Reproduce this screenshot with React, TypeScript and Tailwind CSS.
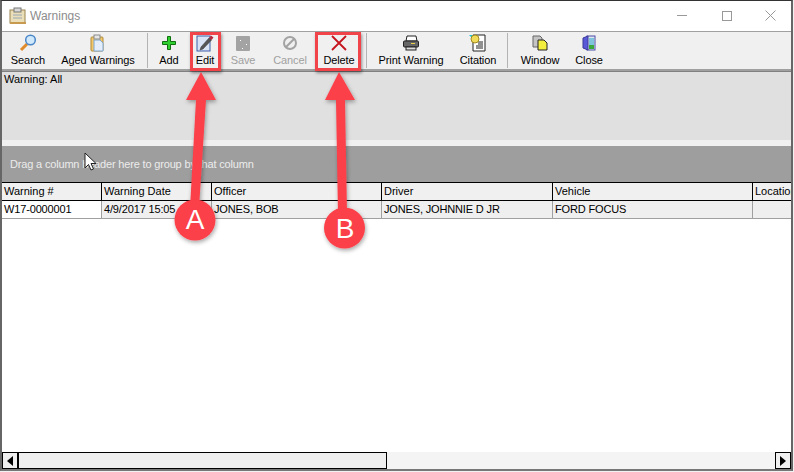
import React from 'react';

const font = { fontFamily: '"Liberation Sans", Arial, sans-serif' };

const SearchIcon = () => (
  <svg width="18" height="18" viewBox="0 0 18 18">
    <path d="M8 10 L2 16" stroke="#e08a2a" strokeWidth="3" />
    <circle cx="11.5" cy="6" r="4.8" fill="#cfe8fb" stroke="#4a86c8" strokeWidth="1.5" />
  </svg>
);

const AgedIcon = () => (
  <svg width="18" height="18" viewBox="0 0 18 18">
    <rect x="2" y="3" width="12" height="14" rx="1" fill="#f3c86a" stroke="#b08a3a" />
    <rect x="5" y="1" width="6" height="4" fill="#e6e6e6" stroke="#8a8a8a" />
    <path d="M5 6h6l3 3v8H5z" fill="#e3eefa" stroke="#7ea6d0" />
  </svg>
);

const AddIcon = () => (
  <svg width="16" height="16" viewBox="0 0 16 16">
    <path d="M6.5 1.5h3v5h5v3h-5v5h-3v-5h-5v-3h5z" fill="#2fd02f" stroke="#0f6f0f" />
  </svg>
);

const EditIcon = () => (
  <svg width="18" height="18" viewBox="0 0 18 18">
    <rect x="1" y="2" width="13" height="15" fill="#d8e4f6" stroke="#3c5fa8" />
    <path d="M5 13 L13 4 L15.5 6 L7 15 L4 16z" fill="#555" stroke="#333" strokeWidth="0.5" />
    <path d="M13 4 L15 1.5 L17.5 3.5 L15.5 6z" fill="#b8283c" />
  </svg>
);

const SaveIcon = () => (
  <svg width="16" height="16" viewBox="0 0 16 16">
    <rect x="1" y="1" width="14" height="15" rx="1" fill="#a3a3a3" />
    <rect x="5" y="5" width="1" height="1" fill="#fff" />
    <rect x="11" y="9" width="1" height="1" fill="#fff" />
    <rect x="7" y="13" width="1" height="1" fill="#fff" />
  </svg>
);

const CancelIcon = () => (
  <svg width="16" height="16" viewBox="0 0 16 16" fill="none" stroke="#a3a3a3" strokeWidth="2">
    <circle cx="8" cy="8" r="6" />
    <path d="M4 12 L12 4" />
  </svg>
);

const DeleteIcon = () => (
  <svg width="18" height="16" viewBox="0 0 18 16" fill="none" stroke="#c4141c" strokeWidth="1.8">
    <path d="M2 1 L16 15 M16 1 L2 15" />
  </svg>
);

const PrintIcon = () => (
  <svg width="18" height="16" viewBox="0 0 18 16">
    <path d="M5 1h9l1 5H4z" fill="#fff" stroke="#222" />
    <rect x="1.5" y="6" width="15" height="6" rx="1" fill="#666" stroke="#222" />
    <rect x="4" y="12" width="10" height="3" fill="#ddd" stroke="#222" />
    <rect x="9" y="8" width="4" height="1" fill="#e8d24a" />
  </svg>
);

const CitationIcon = () => (
  <svg width="18" height="18" viewBox="0 0 18 18">
    <path d="M4 1h12v16H4z" fill="#fff" stroke="#222" />
    <path d="M9 8h5M9 10h5M7 12h7M7 14h7" stroke="#222" />
    <path d="M0 1h4v4z" fill="#19c4d8" />
    <circle cx="6" cy="5" r="4" fill="#f0dc5a" stroke="#a08a20" />
  </svg>
);

const WindowIcon = () => (
  <svg width="16" height="16" viewBox="0 0 16 16">
    <path d="M1 1h7l2 2v9H1z" fill="#c4c4c4" stroke="#666" />
    <path d="M6 5h6l3 3v7H6z" fill="#f4ee3c" stroke="#222" />
  </svg>
);

const CloseIcon = () => (
  <svg width="14" height="16" viewBox="0 0 14 16">
    <rect x="5" y="1" width="8" height="14" fill="#dfe6ef" stroke="#4a4aa8" />
    <rect x="7" y="3" width="5" height="7" fill="#7ec4dc" />
    <rect x="7" y="10" width="5" height="4" fill="#3aa83a" />
    <path d="M1 3 L6 1 V15 L1 13z" fill="#5a5ad8" stroke="#3a3a98" />
  </svg>
);

const tools = [
  { label: 'Search', w: 'w-[50px]', icon: <SearchIcon /> },
  { label: 'Aged Warnings', w: 'w-[90px]', icon: <AgedIcon /> },
  { sep: 'ml-[4px]' },
  { label: 'Add', w: 'w-[40px]', icon: <AddIcon /> },
  { label: 'Edit', w: 'w-[32px]', icon: <EditIcon /> },
  { label: 'Save', w: 'w-[44px]', icon: <SaveIcon />, off: true },
  { label: 'Cancel', w: 'w-[50px]', icon: <CancelIcon />, off: true },
  { label: 'Delete', w: 'w-[48px]', icon: <DeleteIcon /> },
  { sep: 'ml-[3px]' },
  { label: 'Print Warning', w: 'w-[86px]', icon: <PrintIcon /> },
  { label: 'Citation', w: 'w-[48px]', icon: <CitationIcon /> },
  { sep: 'ml-[5px]' },
  { label: 'Window', w: 'w-[62px]', icon: <WindowIcon /> },
  { label: 'Close', w: 'w-[36px]', icon: <CloseIcon /> },
];

const columns = [
  { title: 'Warning #', value: 'W17-0000001', w: 'w-[100px]', cell: 'bg-white' },
  { title: 'Warning Date', value: '4/9/2017 15:05', w: 'w-[110px]', cell: 'bg-[#efefef]' },
  { title: 'Officer', value: 'JONES, BOB', w: 'w-[170px]', cell: 'bg-[#efefef]' },
  { title: 'Driver', value: 'JONES, JOHNNIE D JR', w: 'w-[171px]', cell: 'bg-[#efefef]' },
  { title: 'Vehicle', value: 'FORD FOCUS', w: 'w-[200px]', cell: 'bg-[#efefef]' },
  { title: 'Location', value: '', w: 'flex-1', cell: 'bg-[#efefef]' },
];

export default function App() {
  return (
    <div className="relative w-[794px] h-[472px] overflow-hidden bg-[#f2f2f2] text-black text-[11px]" style={font}>
      <div className="flex flex-col w-[793px] h-[471px] bg-white border-t border-t-[#333] border-x-2 border-x-[#666] border-b-2 border-b-[#777]">
        {/* Title bar */}
        <div className="flex items-center h-[30px] shrink-0 pb-[1px] bg-white">
          <svg className="ml-[7px]" width="19" height="18" viewBox="0 0 19 18">
            <rect x="1" y="3" width="15" height="13" fill="#eadfb8" stroke="#9a8450" />
            <rect x="5" y="1" width="7" height="4" fill="#d8d8d8" stroke="#777" />
            <path d="M4 8h9M4 11h9" stroke="#9aa8b8" />
            <rect x="1" y="15" width="16" height="2" fill="#c89a50" />
          </svg>
          <span className="ml-[2px] text-[12px] text-[#8c8c8c]">Warnings</span>
          <div className="ml-auto flex items-center">
            <span className="w-[45px] flex justify-center"><span className="block w-[10px] h-px bg-[#999]" /></span>
            <span className="w-[46px] flex justify-center"><span className="block w-[10px] h-[10px] border border-[#999]" /></span>
            <svg className="mx-[15px]" width="11" height="11" viewBox="0 0 11 11" stroke="#999" fill="none">
              <path d="M0.5 0.5 L10.5 10.5 M10.5 0.5 L0.5 10.5" />
            </svg>
          </div>
        </div>

        {/* Toolbar */}
        <div className="flex items-stretch h-[40px] shrink-0 bg-[#f0f0f0] border-t border-t-[#a0a0a0] border-b-2 border-b-[#a0a0a0] pl-px">
          {tools.map((t, i) =>
            t.sep ? (
              <div key={i} className={`${t.sep} w-px mr-px my-px bg-[#b4b4b4]`} />
            ) : (
              <div key={i} className={`${t.w} flex flex-col items-center justify-end pb-[2px] shrink-0`}>
                <div className="h-[18px] flex items-center justify-center">{t.icon}</div>
                <span className={`mt-[2px] leading-[13px] tracking-[-0.1px] whitespace-nowrap ${t.off ? 'text-[#a0a0a0]' : 'text-black'}`}>{t.label}</span>
              </div>
            ),
          )}
        </div>

        {/* Filter panel */}
        <div className="h-[69px] shrink-0 bg-[#e0e0e0] border-t border-t-[#808080] pl-[2px] leading-[15px]">Warning: All</div>
        <div className="h-[6px] shrink-0 bg-[#f0f0f0]" />

        {/* Group band */}
        <div className="flex items-center h-[36px] shrink-0 bg-[#9e9e9e] pl-[8px] text-[#ececec] tracking-[-0.17px]">
          Drag a column header here to group by that column
        </div>

        {/* Grid header */}
        <div className="flex h-[19px] shrink-0 bg-[#f0f0f0] border-y border-y-black">
          {columns.map(c => (
            <div key={c.title} className={`${c.w} shrink-0 flex items-center pl-[2px] overflow-hidden whitespace-nowrap border-r border-r-black last:border-r-0`}>
              {c.title}
            </div>
          ))}
        </div>

        {/* Grid row */}
        <div className="flex h-[18px] shrink-0 border-b border-b-[#a0a0a0] tracking-[-0.15px]">
          {columns.map(c => (
            <div key={c.title} className={`${c.w} ${c.cell} shrink-0 flex items-center pl-[2px] whitespace-nowrap border-r border-r-[#a0a0a0] last:border-r-0`}>
              {c.value}
            </div>
          ))}
        </div>

        <div className="flex-1" />

        {/* Scrollbar */}
        <div className="flex h-[17px] shrink-0 bg-[#f4f4f4]">
          <div className="w-[385px] flex bg-[#efefef] border border-black">
            <div className="w-[16px] flex items-center justify-center border-r-2 border-r-black">
              <svg width="6" height="10" viewBox="0 0 6 10"><path d="M6 0 V10 L0 5z" fill="#000" /></svg>
            </div>
          </div>
          <div className="flex-1" />
          <div className="w-[16px] flex items-center justify-center bg-[#efefef] border border-black">
            <svg width="6" height="10" viewBox="0 0 6 10"><path d="M0 0 V10 L6 5z" fill="#000" /></svg>
          </div>
        </div>
      </div>

      {/* Mouse pointer */}
      <svg className="absolute left-[84px] top-[152px]" width="13" height="20" viewBox="0 0 13 20">
        <path d="M1 1 V16 L4.5 12.5 L7 18 L9.5 17 L7 11.5 H12z" fill="#fff" stroke="#222" />
      </svg>

      {/* Red callout boxes */}
      <div className="absolute left-[190px] top-[32px] w-[31px] h-[39px] border-[3px] border-[#f0434a] shadow-[1px_2px_3px_rgba(0,0,0,0.4)]" />
      <div className="absolute left-[315px] top-[32px] w-[46px] h-[39px] border-[3px] border-[#f0434a] shadow-[1px_2px_3px_rgba(0,0,0,0.4)]" />

      {/* Arrows */}
      <svg className="absolute left-0 top-0" width="794" height="472" viewBox="0 0 794 472">
        <defs>
          <filter id="sh" x="-30%" y="-30%" width="160%" height="160%">
            <feDropShadow dx="1" dy="2" stdDeviation="2" floodColor="#000" floodOpacity="0.35" />
          </filter>
        </defs>
        <g filter="url(#sh)" fill="#fb3f48">
          <path d="M201 72 L216 100 L206 100 L199 208 L190 208 L196 100 L186 100 Z" />
          <circle cx="195" cy="220" r="20.5" />
          <path d="M339 72 L355 100 L345 100 L347 214 L338 214 L336 100 L325 100 Z" />
          <circle cx="344.5" cy="228" r="20.5" />
        </g>
      </svg>
      <span className="absolute left-[175px] top-[202px] w-[40px] text-center text-[28px] leading-[36px] text-white">A</span>
      <span className="absolute left-[325px] top-[211px] w-[40px] text-center text-[28px] leading-[36px] text-white">B</span>
    </div>
  );
}
